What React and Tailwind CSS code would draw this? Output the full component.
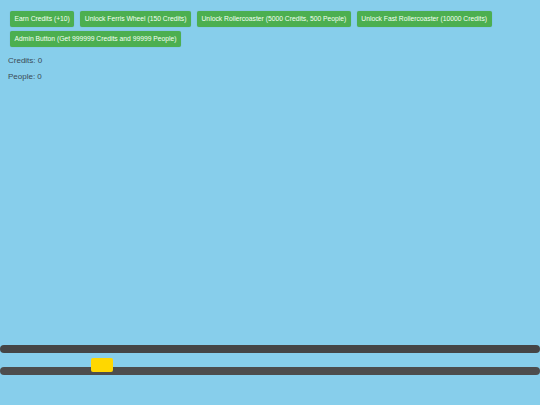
import React, { useState } from 'react';

const App = () => {
  const [credits, setCredits] = useState(0);
  const [people, setPeople] = useState(0);

  const buttons = [
    { label: 'Earn Credits (+10)', onClick: () => setCredits(c => c + 10) },
    { label: 'Unlock Ferris Wheel (150 Credits)', onClick: () => {} },
    { label: 'Unlock Rollercoaster (5000 Credits, 500 People)', onClick: () => {} },
    { label: 'Unlock Fast Rollercoaster (10000 Credits)', onClick: () => {} },
    { label: 'Admin Button (Get 999999 Credits and 99999 People)', onClick: () => { setCredits(999999); setPeople(99999); } },
  ];

  return (
    <div className="w-[540px] h-[405px] bg-[#87ceeb] flex flex-col font-['Liberation_Sans',Arial,sans-serif] overflow-hidden">
      {/* ── Controls ── */}
      <div className="flex flex-wrap gap-x-[6px] gap-y-[4px] pl-[10px] pr-[20px] pt-[11px]">
        {buttons.map((b, i) => (
          <button key={i} onClick={b.onClick}
            className="h-[16px] px-[4.5px] rounded-[2px] bg-[#4caf50] text-[#f4fff4] text-[6.75px] leading-none shadow-[0_0_1px_rgba(0,0,0,0.2)]">
            {b.label}
          </button>
        ))}
      </div>

      {/* ── Stats ── */}
      <p className="text-[8px] text-[#3a4a55] ml-[8px] mt-[10px] leading-none">Credits: {credits}</p>
      <p className="text-[8px] text-[#3a4a55] ml-[8px] mt-[8px] leading-none">People: {people}</p>

      {/* ── Tracks ── */}
      <div className="mt-auto mb-[30px] relative flex flex-col gap-[14px]">
        <div className="h-[8px] rounded-full bg-[#454545]" />
        <div className="h-[8px] rounded-full bg-[#4d4d4d]" />
        <div className="absolute left-[91px] top-[13px] w-[22px] h-[14px] rounded-[2px] bg-[#ffd700]" />
      </div>
    </div>
  );
};

export default App;
